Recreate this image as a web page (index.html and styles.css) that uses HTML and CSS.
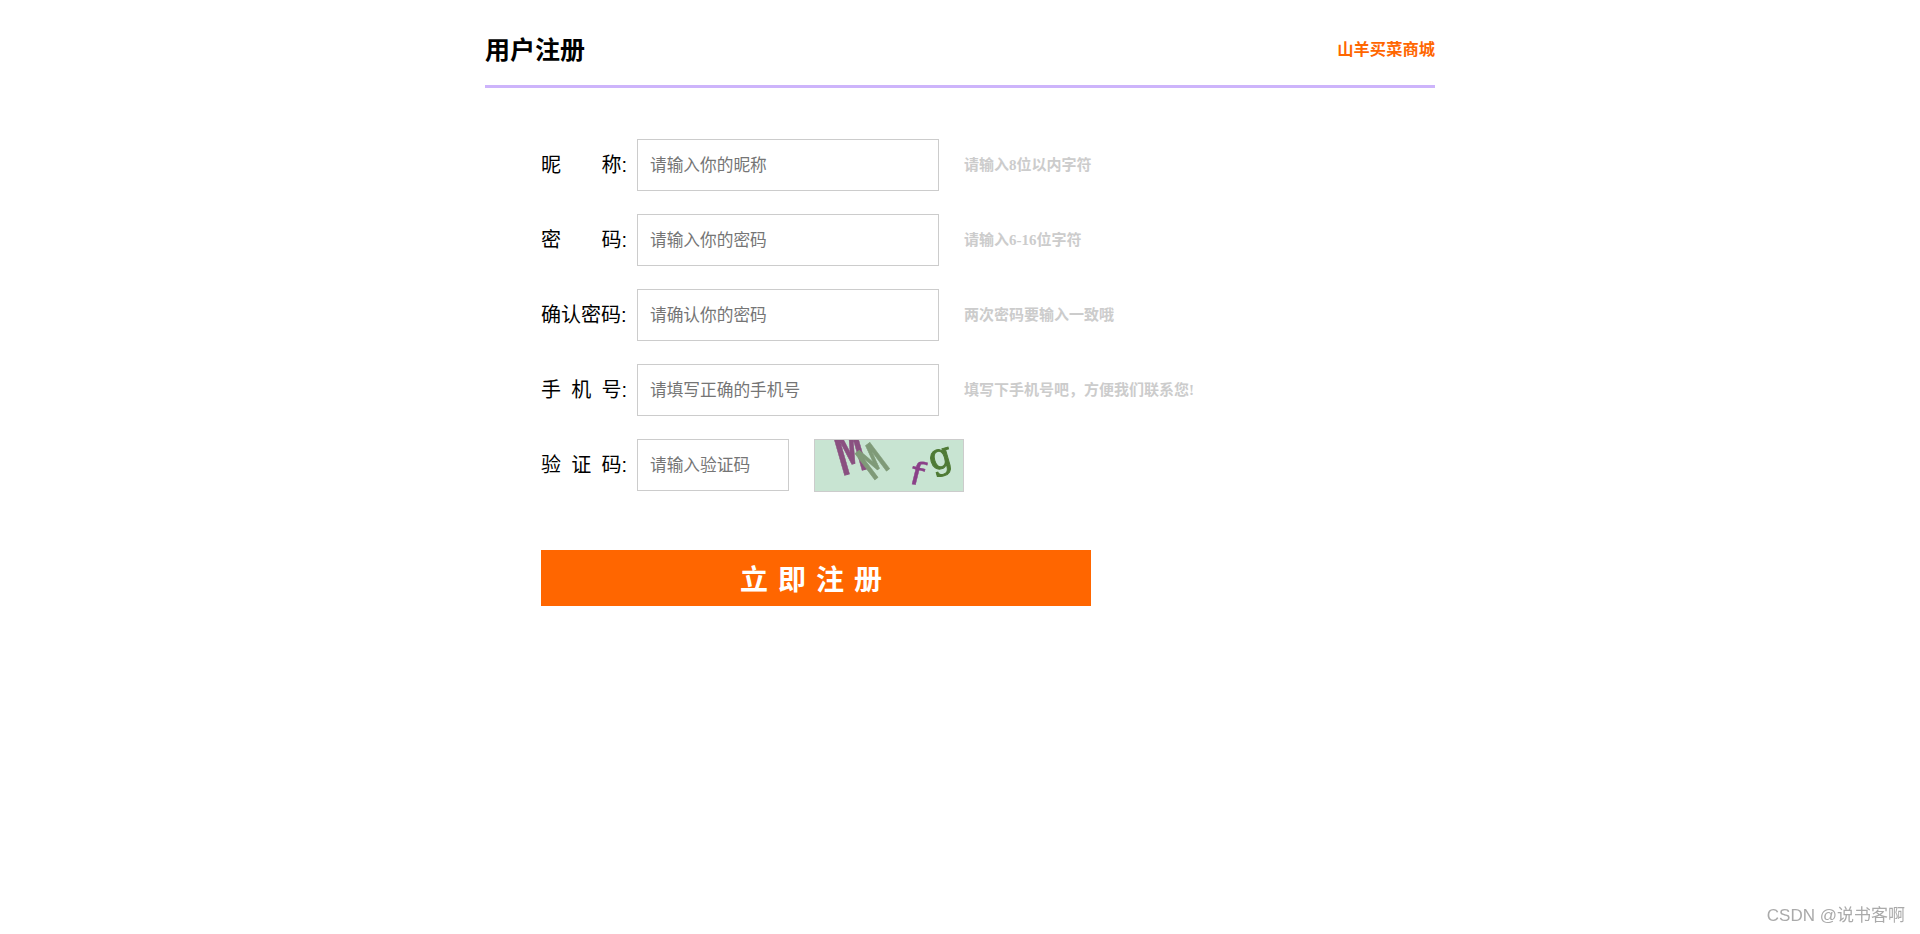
FILE: index.html
```html
<!DOCTYPE html>
<html lang="zh-CN">
<head>
  <meta charset="UTF-8">
  <title>用户注册</title>
  <meta name="viewport" content="width=device-width, initial-scale=1.0">
  <link rel="stylesheet" href="styles.css">
</head>
<body>
  <div class="container">
    <header class="top">
      <h1>用户注册</h1>
      <a class="shop" href="#">山羊买菜商城</a>
    </header>

    <form class="reg-form">
      <div class="row">
        <label class="name" for="nick"><span>昵</span><span>称:</span></label>
        <input type="text" id="nick" placeholder="请输入你的昵称">
        <span class="hint">请输入8位以内字符</span>
      </div>
      <div class="row">
        <label class="name" for="pwd"><span>密</span><span>码:</span></label>
        <input type="password" id="pwd" placeholder="请输入你的密码">
        <span class="hint">请输入6-16位字符</span>
      </div>
      <div class="row">
        <label class="name" for="pwd2"><span>确认密码:</span></label>
        <input type="password" id="pwd2" placeholder="请确认你的密码">
        <span class="hint">两次密码要输入一致哦</span>
      </div>
      <div class="row">
        <label class="name" for="tel"><span>手</span><span>机</span><span>号:</span></label>
        <input type="text" id="tel" placeholder="请填写正确的手机号">
        <span class="hint">填写下手机号吧，方便我们联系您!</span>
      </div>
      <div class="row">
        <label class="name" for="code"><span>验</span><span>证</span><span>码:</span></label>
        <input class="short" type="text" id="code" placeholder="请输入验证码">
        <svg class="captcha" viewBox="0 0 148 51" width="148" height="51">
          <g class="blur">
            <text class="c1" transform="translate(27 36) rotate(-16) scale(.9 1.9)">M</text>
            <text class="c2" transform="translate(58 41) rotate(-37) scale(.72 1.4)">M</text>
            <text class="c3" transform="translate(93 43) rotate(14) scale(1.2 1)">f</text>
            <text class="c4" transform="translate(117 31) rotate(-16)">g</text>
          </g>
        </svg>
      </div>
      <button type="submit">立即注册</button>
    </form>
  </div>

  <div class="watermark">CSDN @说书客啊</div>
</body>
</html>
```

FILE: styles.css
```css
body {
  margin: 0;
  background: #fff;
  color: #000;
  font-family: "Liberation Sans", "Noto Sans CJK SC", sans-serif;
}

.container {
  width: 950px;
  margin: 0 auto;
}

.top {
  display: flex;
  justify-content: space-between;
  align-items: center;
  height: 75px;
  padding-top: 10px;
  border-bottom: 3px solid #cdb4fb;
}

.top h1 {
  margin: 0;
  font-size: 25px;
  font-weight: bold;
}

.shop {
  color: #ff6600;
  font-size: 16.3px;
  font-weight: bold;
  text-decoration: none;
}

.reg-form {
  padding: 51px 0 0 56px;
}

.row {
  display: flex;
  align-items: center;
  height: 52px;
  margin-bottom: 23px;
}

.name {
  display: flex;
  justify-content: space-between;
  width: 86px;
  margin-right: 10px;
  padding-bottom: 4px;
  font-size: 20px;
  white-space: nowrap;
}

input {
  width: 302px;
  height: 52px;
  padding: 2px 12px 0;
  border: 1px solid #ccc;
  box-sizing: border-box;
  font-size: 16.7px;
  font-family: inherit;
}

input.short {
  width: 152px;
}

.hint {
  margin-left: 25px;
  padding-bottom: 4px;
  color: #ccc;
  font-size: 15px;
  font-weight: bold;
  font-family: "Liberation Serif", "Noto Sans CJK SC", serif;
}

.captcha {
  margin-left: 25px;
  background: #c8e4d2;
  border: 1px solid #ccc;
}

.blur {
  filter: blur(0.5px);
}

.captcha text {
  font-family: "DejaVu Sans", sans-serif;
}

.c1 {
  fill: #8a5080;
  stroke: #8a5080;
  stroke-width: 0.5px;
  font-size: 32px;
  font-weight: bold;
}

.c2 {
  fill: #7f9a78;
  stroke: #7f9a78;
  stroke-width: 0.6px;
  font-size: 32px;
  font-weight: bold;
}

.c3 {
  fill: #8a4088;
  stroke: #8a4088;
  stroke-width: 0.4px;
  font-size: 32px;
}

.captcha .c4 {
  fill: #4f7a35;
  stroke: #4f7a35;
  stroke-width: 1px;
  font-size: 36px;
  font-family: "DejaVu Serif", serif;
}

button {
  display: block;
  width: 550px;
  height: 56px;
  margin-top: 59px;
  background: #ff6600;
  border: none;
  color: #fff;
  font-size: 28px;
  font-weight: bold;
  font-family: inherit;
  letter-spacing: 10px;
}

.watermark {
  position: fixed;
  right: 15px;
  bottom: 8px;
  color: #aaa;
  font-size: 17px;
}
```
